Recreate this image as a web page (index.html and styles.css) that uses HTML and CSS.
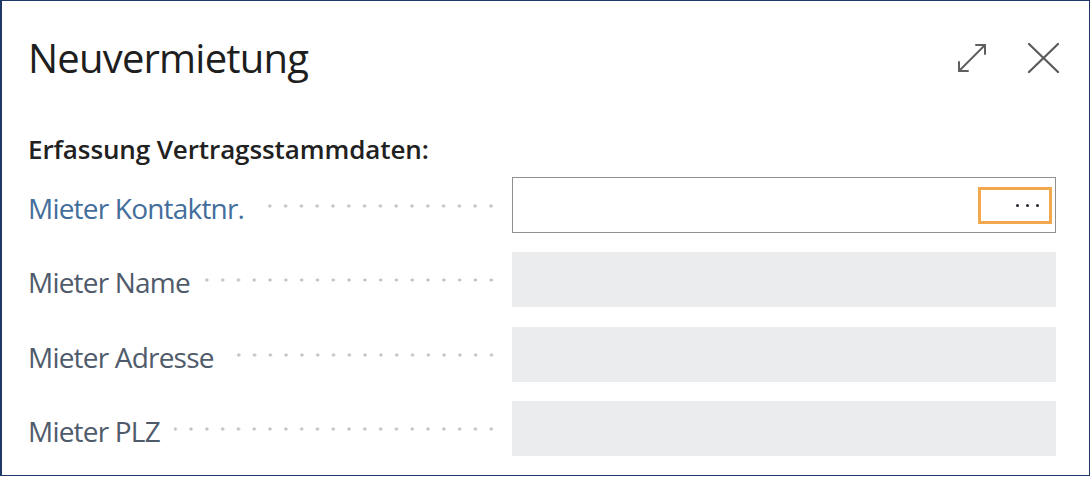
FILE: index.html
```html
<!DOCTYPE html>
<html lang="de">
<head>
<meta charset="utf-8">
<title>Neuvermietung</title>
<link rel="stylesheet" href="styles.css">
</head>
<body>
<div class="dialog">
  <header class="dlg-header">
    <h1 class="title">Neuvermietung</h1>
    <div class="actions">
      <button class="icon-btn" aria-label="Maximieren">
        <svg width="32" height="32" viewBox="0 0 32 32" fill="none" stroke="#5f5f5f" stroke-width="2" stroke-linecap="round" stroke-linejoin="round">
          <path d="M3 29 L29 3"/>
          <path d="M20 3 H29 V12"/>
          <path d="M3 20 V29 H12"/>
        </svg>
      </button>
      <button class="icon-btn" aria-label="Schließen">
        <svg width="32" height="32" viewBox="0 0 32 32" fill="none" stroke="#5a5a5a" stroke-width="2.2" stroke-linecap="round">
          <path d="M2 2 L31 30"/>
          <path d="M31 2 L2 30"/>
        </svg>
      </button>
    </div>
  </header>

  <h2 class="group-title">Erfassung Vertragsstammdaten:</h2>

  <div class="fields">
    <div class="row">
      <div class="caption caption-active"><span class="caption-text">Mieter Kontaktnr.</span><span class="leader"></span></div>
      <div class="input input-edit"><span class="lookup"><span class="dot"></span><span class="dot"></span><span class="dot"></span></span></div>
    </div>
    <div class="row">
      <div class="caption"><span class="caption-text">Mieter Name</span><span class="leader"></span></div>
      <div class="input input-readonly"></div>
    </div>
    <div class="row">
      <div class="caption"><span class="caption-text">Mieter Adresse</span><span class="leader"></span></div>
      <div class="input input-readonly"></div>
    </div>
    <div class="row">
      <div class="caption"><span class="caption-text">Mieter PLZ</span><span class="leader"></span></div>
      <div class="input input-readonly"></div>
    </div>
  </div>
</div>
</body>
</html>
```

FILE: styles.css
```css
* {
  box-sizing: border-box;
}

html, body {
  margin: 0;
  padding: 0;
  background: #ffffff;
}

body {
  font-family: "Open Sans", "Noto Sans", "Liberation Sans", sans-serif;
  color: #212121;
}

.dialog {
  width: 1090px;
  height: 476px;
  border: 1px solid #1f3868;
  border-left-width: 2px;
  padding: 0 33px 0 26px;
  box-shadow: 0 1px 0 #c3cbe0;
  background: #ffffff;
}

.dlg-header {
  display: flex;
  justify-content: space-between;
  align-items: center;
  padding-top: 33px;
}

.title {
  margin: 0;
  font-size: 40px;
  line-height: 48px;
  font-weight: 500;
  letter-spacing: -0.8px;
  color: #1e1e1e;
}

.actions {
  display: flex;
  align-items: center;
  gap: 39px;
  margin-right: -3px;
}

.icon-btn {
  width: 32px;
  height: 32px;
  padding: 0;
  margin: 0;
  border: 0;
  background: transparent;
  display: block;
}

.icon-btn svg {
  display: block;
}

.group-title {
  margin: 51px 0 0;
  font-size: 26px;
  line-height: 32px;
  font-weight: 600;
  letter-spacing: -0.1px;
  color: #212121;
}

.fields {
  margin-top: 12px;
  display: flex;
  flex-direction: column;
  gap: 18.5px;
}

.row {
  display: flex;
  align-items: center;
  gap: 18px;
  height: 56px;
}

.caption {
  width: 466px;
  flex: none;
  display: flex;
  align-items: center;
  gap: 14px;
  padding-top: 5px;
  font-size: 28px;
  line-height: 40px;
  letter-spacing: -0.8px;
  color: #4f5b6b;
  white-space: nowrap;
}

.caption-active {
  color: #436e9c;
}

.leader {
  flex: 1;
  height: 4px;
  margin-top: -4px;
  background-image: radial-gradient(circle, #c2c2c2 1.4px, transparent 1.8px);
  background-size: 15.8px 4px;
  background-repeat: repeat-x;
  background-position: right -5px center;
}

.input {
  flex: 1;
  height: 56px;
}

.input-edit {
  border: 1px solid #8f8f94;
  background: #ffffff;
  display: flex;
  align-items: center;
  justify-content: flex-end;
  padding-right: 3px;
}

.input-readonly {
  background: #ebecee;
  height: 55px;
}

.lookup {
  width: 74px;
  height: 37px;
  border: 3px solid #f2a94e;
  display: flex;
  align-items: center;
  justify-content: flex-end;
  gap: 7px;
  padding-right: 10px;
}

.dot {
  width: 3px;
  height: 3px;
  border-radius: 50%;
  background: #1d2630;
}
```
